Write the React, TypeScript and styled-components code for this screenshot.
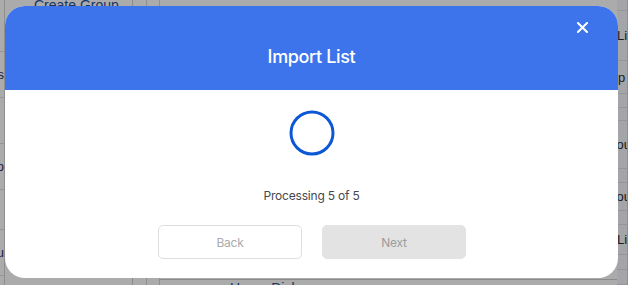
import React from 'react'
import styled, { createGlobalStyle } from 'styled-components'

const GlobalStyle = createGlobalStyle`
  html, body {
    margin: 0;
    padding: 0;
    width: 628px;
    height: 285px;
    overflow: hidden;
    background: #ffffff;
  }
  * {
    box-sizing: border-box;
  }
`

// page behind the dialog

const Page = styled.div`
  display: flex;
  height: 285px;
  font-family: 'Liberation Sans', Arial, sans-serif;
  font-size: 13px;
  color: #2b2b2b;
`

const EdgeColumn = styled.div<{ width: number; tint?: string }>`
  width: ${p => p.width}px;
  flex-shrink: 0;
  overflow: hidden;
  background: ${p => p.tint || '#ffffff'};
  border-right: 1px solid #d6d6d6;
`

const EdgeRow = styled.div<{ height: number; end?: boolean }>`
  height: ${p => p.height}px;
  display: flex;
  align-items: center;
  justify-content: ${p => (p.end ? 'flex-end' : 'flex-start')};
  white-space: nowrap;
  border-bottom: 1px solid #dde0e5;
`

const EdgeText = styled.span<{ shift?: number; navy?: boolean }>`
  flex-shrink: 0;
  margin-left: ${p => -(p.shift || 0)}px;
  color: ${p => (p.navy ? '#1d2f6b' : '#2b2b2b')};
`

const Sidebar = styled.div`
  width: 128px;
  flex-shrink: 0;
  border-right: 1px solid #d0d0d0;
`

const SidebarLink = styled.div`
  margin: -3px 0 0 29px;
  color: #274f9a;
  font-size: 14px;
`

const Spacer = styled.div<{ width: number }>`
  width: ${p => p.width}px;
  flex-shrink: 0;
  border-right: 1px solid #d6d6d6;
`

const Main = styled.div`
  flex: 1;
  display: flex;
  flex-direction: column;
  justify-content: flex-end;
`

const MainFooter = styled.div`
  padding: 0 0 0 70px;
  margin-bottom: -8px;
  border-top: 1px solid #d0d0d0;
  height: 14px;
  color: #274f9a;
  font-size: 14px;
`

// dialog

const Overlay = styled.div`
  position: fixed;
  inset: 0;
  background: rgba(0, 0, 0, 0.33);
  padding: 6px 0 0 5px;
`

const Dialog = styled.div`
  position: relative;
  width: 613px;
  border-radius: 20px;
  overflow: hidden;
  background: #ffffff;
  font-family: Inter, 'Liberation Sans', sans-serif;
`

const Header = styled.div`
  height: 84px;
  padding-top: 40px;
  background: #3d74ec;
  text-align: center;
`

const Title = styled.h2`
  margin: 0;
  font-size: 18px;
  line-height: 22px;
  font-weight: 500;
  letter-spacing: -0.35px;
  color: #ffffff;
`

const CloseButton = styled.button`
  position: absolute;
  top: 16px;
  right: 30px;
  width: 11px;
  height: 11px;
  padding: 0;
  border: none;
  background: transparent;
  display: flex;
  cursor: pointer;
`

const Body = styled.div`
  display: flex;
  flex-direction: column;
  align-items: center;
  padding: 20px 0 19px;
`

const Spinner = styled.svg`
  display: block;
  width: 46px;
  height: 46px;
`

const Status = styled.p`
  margin: 32px 0 0;
  font-size: 12px;
  line-height: 16px;
  letter-spacing: -0.2px;
  color: #46484d;
`

const Actions = styled.div`
  display: flex;
  gap: 20px;
  margin-top: 21px;
  margin-left: 1px;
`

const ActionButton = styled.button<{ filled?: boolean }>`
  width: 144px;
  height: 34px;
  border-radius: 5px;
  border: 1px solid ${p => (p.filled ? '#e3e3e3' : '#dedede')};
  background: ${p => (p.filled ? '#e3e3e3' : '#ffffff')};
  color: ${p => (p.filled ? '#9c9c9c' : '#ababab')};
  font-family: Inter, 'Liberation Sans', sans-serif;
  font-size: 12px;
  letter-spacing: -0.2px;
  cursor: default;
`

const leftEdge = [
  { h: 52, t: '' },
  { h: 46, t: 'Lists' },
  { h: 46, t: '' },
  { h: 46, t: 'Intro' },
  { h: 40, t: '' },
  { h: 46, t: 'Menu' }
]

const rightEdge = [
  { h: 11, t: '', s: 0 },
  { h: 50, t: 'Lists', s: 0 },
  { h: 33, t: 'Group', s: 28 },
  { h: 14, t: '', s: 0 },
  { h: 13, t: '', s: 0 },
  { h: 48, t: 'Group', s: 15 },
  { h: 14, t: '', s: 0 },
  { h: 28, t: 'Group', s: 15 },
  { h: 14, t: '', s: 0 },
  { h: 30, t: 'Lists', s: 0 },
  { h: 15, t: '', s: 0 },
  { h: 15, t: '', s: 0 }
]

const App = () => {
  return (
    <>
      <GlobalStyle />
      <Page>
        <EdgeColumn width={5}>
          {leftEdge.map((row, i) => (
            <EdgeRow key={i} height={row.h} end>
              <EdgeText navy>{row.t}</EdgeText>
            </EdgeRow>
          ))}
        </EdgeColumn>
        <Sidebar>
          <SidebarLink>Create Group</SidebarLink>
        </Sidebar>
        <Spacer width={14} />
        <Spacer width={13} />
        <Main>
          <MainFooter>Home Disk</MainFooter>
        </Main>
        <EdgeColumn width={11} tint="#f5f7fb">
          {rightEdge.map((row, i) => (
            <EdgeRow key={i} height={row.h}>
              <EdgeText shift={row.s}>{row.t}</EdgeText>
            </EdgeRow>
          ))}
        </EdgeColumn>
      </Page>

      <Overlay>
        <Dialog>
          <Header>
            <Title>Import List</Title>
          </Header>
          <CloseButton aria-label="Close">
            <svg width="11" height="11" viewBox="0 0 11 11">
              <path d="M1 1L10 10M10 1L1 10" stroke="#ffffff" strokeWidth="2" strokeLinecap="square" />
            </svg>
          </CloseButton>
          <Body>
            <Spinner viewBox="0 0 46 46">
              <circle cx="23" cy="23" r="21" fill="none" stroke="#0b57d6" strokeWidth="3" />
            </Spinner>
            <Status>Processing 5 of 5</Status>
            <Actions>
              <ActionButton>Back</ActionButton>
              <ActionButton filled>Next</ActionButton>
            </Actions>
          </Body>
        </Dialog>
      </Overlay>
    </>
  )
}

export default App
